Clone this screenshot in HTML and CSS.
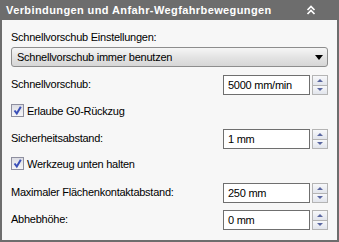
FILE: index.html
```html
<!DOCTYPE html>
<html>
<head>
<meta charset="utf-8">
<link rel="stylesheet" href="styles.css">
</head>
<body>
<div class="panel">
  <div class="header">
    <span class="title">Verbindungen und Anfahr-Wegfahrbewegungen</span>
    <svg class="collapse" width="10" height="10" viewBox="0 0 10 10"><polyline points="1.5,5 5,1.5 8.5,5" fill="none" stroke="#fff" stroke-width="1.7"/><polyline points="1.5,9 5,5.5 8.5,9" fill="none" stroke="#fff" stroke-width="1.7"/></svg>
  </div>
  <div class="body">
    <div class="label first">Schnellvorschub Einstellungen:</div>
    <div class="select">
      <span>Schnellvorschub immer benutzen</span>
      <svg width="8" height="5" viewBox="0 0 8 5"><polygon points="0,0 8,0 4,5" fill="#000"/></svg>
    </div>
    <div class="row mt8">
      <span class="label">Schnellvorschub:</span>
      <div class="spin"><div class="input">5000 mm/min</div><div class="btns"><div class="btn"><i class="up"></i></div><div class="btn"><i class="down"></i></div></div></div>
    </div>
    <div class="check mt9"><span class="box"><svg width="11" height="11" viewBox="0 0 11 11"><polyline points="2.5,5.5 4.8,8.5 8.8,1.8" fill="none" stroke="#3a4fb8" stroke-width="2"/></svg></span><span class="label">Erlaube G0-Rückzug</span></div>
    <div class="row mt12">
      <span class="label">Sicherheitsabstand:</span>
      <div class="spin"><div class="input">1 mm</div><div class="btns"><div class="btn"><i class="up"></i></div><div class="btn"><i class="down"></i></div></div></div>
    </div>
    <div class="check mt8"><span class="box"><svg width="11" height="11" viewBox="0 0 11 11"><polyline points="2.5,5.5 4.8,8.5 8.8,1.8" fill="none" stroke="#3a4fb8" stroke-width="2"/></svg></span><span class="label">Werkzeug unten halten</span></div>
    <div class="row mt13">
      <span class="label">Maximaler Flächenkontaktabstand:</span>
      <div class="spin"><div class="input">250 mm</div><div class="btns"><div class="btn"><i class="up"></i></div><div class="btn"><i class="down"></i></div></div></div>
    </div>
    <div class="row mt7">
      <span class="label">Abhebhöhe:</span>
      <div class="spin"><div class="input">0 mm</div><div class="btns"><div class="btn"><i class="up"></i></div><div class="btn"><i class="down"></i></div></div></div>
    </div>
  </div>
</div>
</body>
</html>
```

FILE: styles.css
```css
* { box-sizing: border-box; }
html, body { margin: 0; padding: 0; }
body {
  width: 339px;
  height: 242px;
  font-family: "Liberation Sans", Arial, sans-serif;
  font-size: 11px;
  color: #000;
  background: #fff;
}
.panel {
  width: 339px;
  height: 242px;
  display: flex;
  flex-direction: column;
  background: #6d6d6d;
}
.header {
  height: 20px;
  flex: none;
  display: flex;
  align-items: center;
  justify-content: space-between;
  padding: 0 24px 0 6px;
}
.title {
  color: #fff;
  font-weight: bold;
  font-size: 11px;
  letter-spacing: 0.4px;
}
.collapse { margin-top: -1px; margin-right: -1px; }
.body {
  flex: 1;
  margin: 0 2px 2px 2px;
  background: #f7f7f7;
  padding: 10px 9px 0 9px;
  display: flex;
  flex-direction: column;
}
.label {
  letter-spacing: -0.25px;
  line-height: 14px;
  white-space: nowrap;
}
.select {
  margin-top: 3px;
  height: 20px;
  border: 1px solid #8d8d8d;
  border-radius: 3px;
  background: linear-gradient(#f6f6f6, #e4e4e4 50%, #d6d6d6);
  display: flex;
  align-items: center;
  justify-content: space-between;
  padding: 0 4px 0 5px;
  letter-spacing: -0.25px;
}
.select svg { margin-top: 1px; }
.row {
  height: 20px;
  display: flex;
  align-items: center;
  justify-content: space-between;
}
.row .label { margin-top: -3px; }
.spin {
  display: flex;
  gap: 2px;
  height: 20px;
}
.input {
  width: 87px;
  height: 20px;
  border: 1px solid #6f6f6f;
  background: #fff;
  padding: 0 4px;
  line-height: 18px;
  letter-spacing: -0.25px;
}
.btns {
  width: 16px;
  height: 20px;
  border: 1px solid #b4b4b4;
  display: flex;
  flex-direction: column;
  background: #eceef2;
}
.btn {
  flex: 1;
  display: flex;
  align-items: center;
  justify-content: center;
  background: linear-gradient(#f7f8fa, #e2e5ec);
}
.btn + .btn { border-top: 1px solid #b4b4b4; }
.btn i { width: 0; height: 0; border-left: 3px solid transparent; border-right: 3px solid transparent; }
.btn i.up { border-bottom: 3px solid #5a67a0; }
.btn i.down { border-top: 3px solid #5a67a0; }
.check {
  height: 13px;
  display: flex;
  align-items: center;
  gap: 3px;
}
.box {
  width: 13px;
  height: 13px;
  border: 1px solid #8e8f9f;
  background: linear-gradient(#dcdde4, #f6f6f8);
  display: flex;
  align-items: center;
  justify-content: center;
}
.first { margin-top: 0; }
.mt7 { margin-top: 7px; }
.mt8 { margin-top: 8px; }
.mt9 { margin-top: 9px; }
.mt12 { margin-top: 12px; }
.mt13 { margin-top: 13px; }
```
